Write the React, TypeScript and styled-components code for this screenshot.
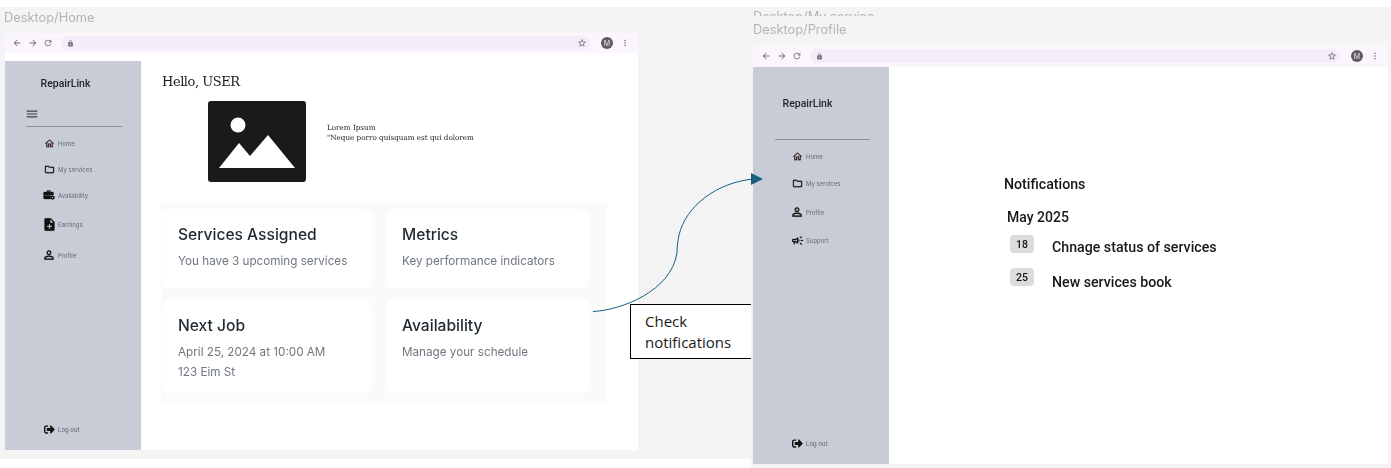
import React from "react";
import styled, { createGlobalStyle } from "styled-components";
import {
  MdArrowBack,
  MdArrowForward,
  MdLock,
  MdMenu,
  MdMoreVert,
  MdNoteAdd,
  MdOutlineCampaign,
  MdOutlineFolder,
  MdOutlineHome,
  MdOutlinePersonOutline,
  MdRefresh,
  MdStarBorder,
} from "react-icons/md";
import { FaSignOutAlt } from "react-icons/fa";

const GlobalStyle = createGlobalStyle`
  html, body {
    margin: 0;
    padding: 0;
    background: #ffffff;
    overflow: hidden;
  }
`;

const Canvas = styled.div`
  position: relative;
  width: 1391px;
  height: 468px;
  overflow: hidden;
  background: #ffffff;
  font-family: "Inter", "Liberation Sans", sans-serif;
`;

const Backdrop = styled.div<{ $x: number; $y: number; $w: number; $h: number }>`
  position: absolute;
  left: ${(p) => p.$x}px;
  top: ${(p) => p.$y}px;
  width: ${(p) => p.$w}px;
  height: ${(p) => p.$h}px;
  background: #f4f4f4;
`;

const FrameLabel = styled.div<{ $x: number; $y: number; $clip?: number }>`
  position: absolute;
  left: ${(p) => p.$x}px;
  top: ${(p) => p.$y}px;
  height: ${(p) => p.$clip ?? 16}px;
  overflow: hidden;
  font-size: 12.8px;
  line-height: 16px;
  color: #b4b4b4;
  white-space: nowrap;
  filter: blur(0.3px);
`;

const Frame = styled.div<{ $x: number; $y: number; $w: number; $h: number }>`
  position: absolute;
  left: ${(p) => p.$x}px;
  top: ${(p) => p.$y}px;
  width: ${(p) => p.$w}px;
  height: ${(p) => p.$h}px;
  display: flex;
  flex-direction: column;
  background: #ffffff;
  filter: blur(0.3px);
`;

const BrowserBar = styled.div<{ $h: number; $pad: number }>`
  flex: none;
  height: ${(p) => p.$h}px;
  display: flex;
  align-items: center;
  padding: 0 8px 0 ${(p) => p.$pad}px;
  background: #fbf5fd;
  color: #6f7276;
  font-size: 10px;
`;

const BarIcons = styled.div`
  display: flex;
  align-items: center;
  gap: 5.5px;
`;

const Omnibox = styled.div`
  flex: 1;
  height: 14px;
  margin: 0 11px 0 8px;
  padding: 0 3px 0 6px;
  display: flex;
  align-items: center;
  justify-content: space-between;
  border-radius: 7px;
  background: #f2edf8;
  font-size: 7px;
`;

const Star = styled.span`
  display: flex;
  font-size: 10px;
`;

const Avatar = styled.div`
  flex: none;
  width: 12px;
  height: 12px;
  margin-right: 7px;
  display: flex;
  align-items: center;
  justify-content: center;
  border-radius: 50%;
  background: #5f5b63;
  color: #d8d8d8;
  font-size: 7px;
  font-weight: 500;
`;

const Body = styled.div<{ $top: number }>`
  flex: 1;
  min-height: 0;
  display: flex;
  margin-top: ${(p) => p.$top}px;
`;

const Sidebar = styled.aside<{ $top: number }>`
  flex: none;
  width: 136px;
  display: flex;
  flex-direction: column;
  padding: ${(p) => p.$top}px 0 15px;
  box-sizing: border-box;
  background: #c7ccd7;
`;

const LogoCard = styled.div<{ $left: number; $h: number }>`
  width: 69px;
  height: ${(p) => p.$h}px;
  margin-left: ${(p) => p.$left}px;
  display: flex;
  align-items: center;
  justify-content: center;
  border-radius: 4px;
  box-shadow: 0 0 0 1px #c4c9d4;
  font-family: "Roboto", sans-serif;
  font-size: 10.5px;
  font-weight: 500;
  color: #23252b;
`;

const MenuSlot = styled.div`
  height: 14px;
  margin: 12px 0 0 20px;
  display: flex;
  color: #3c3f46;
  font-size: 14px;
`;

const Divider = styled.div<{ $top: number; $left: number; $w: number }>`
  height: 1px;
  width: ${(p) => p.$w}px;
  margin: ${(p) => p.$top}px 0 0 ${(p) => p.$left}px;
  background: #8c909a;
`;

const NavRow = styled.div<{ $top: number }>`
  height: 12px;
  margin-top: ${(p) => p.$top}px;
  padding-left: 39px;
  display: flex;
  align-items: center;
  gap: 4px;
  font-size: 6px;
  color: #676a73;
  white-space: nowrap;
`;

const LogoutRow = styled(NavRow)`
  margin-top: auto;
  color: #5d6069;
`;

const NavIcon = styled.span<{ $size?: number; $tint?: string }>`
  flex: none;
  width: 10px;
  display: flex;
  justify-content: center;
  font-size: ${(p) => p.$size ?? 10}px;
  color: ${(p) => p.$tint ?? "#111111"};

  svg {
    flex: none;
  }

  svg path:not([fill="none"]) {
    stroke: currentColor;
    stroke-width: 0.4px;
  }
`;

const HomeMain = styled.main`
  flex: 1;
  padding: 11px 0 0 21px;
`;

const Greeting = styled.h1`
  margin: 0;
  font-family: "DejaVu Serif", "Liberation Serif", serif;
  font-size: 13px;
  letter-spacing: -0.45px;
  line-height: 20px;
  font-weight: 400;
  color: #1b1b1b;
`;

const Hero = styled.section`
  display: flex;
  margin: 9px 0 0 46px;
`;

const HeroImage = styled.svg`
  flex: none;
  width: 98px;
  height: 81px;
`;

const HeroText = styled.p`
  margin: 21.5px 0 0 21px;
  font-family: "DejaVu Serif", "Liberation Serif", serif;
  font-size: 7.2px;
  line-height: 10px;
  color: #222222;
`;

const CardPanel = styled.section`
  width: 446px;
  height: 200px;
  margin: 21px 0 0 -1px;
  padding: 6px 0 0 1px;
  box-sizing: border-box;
  display: grid;
  grid-template-columns: 210px 203px;
  grid-template-rows: 79px 93px;
  column-gap: 14px;
  row-gap: 12px;
  background: #fafafa;
`;

const Card = styled.div`
  padding: 14.5px 16px 0;
  border-radius: 7px;
  background: #ffffff;
`;

const CardTitle = styled.h2`
  margin: 0 0 5px;
  font-size: 15.6px;
  line-height: 22px;
  font-weight: 500;
  color: #1f2a30;
`;

const CardLine = styled.div`
  font-size: 11.7px;
  line-height: 20px;
  color: #6f7780;
  white-space: nowrap;
`;

const NoticeMain = styled.main`
  flex: 1;
  padding: 108px 0 0 115px;
  font-family: "Roboto", sans-serif;
  color: #17181a;
`;

const NoticeTitle = styled.h2`
  margin: 0;
  font-size: 14.2px;
  line-height: 18px;
  font-weight: 500;
`;

const MonthLabel = styled.h3`
  margin: 15px 0 0 3px;
  font-size: 14px;
  line-height: 18px;
  font-weight: 500;
`;

const NoticeRow = styled.div<{ $top: number }>`
  display: flex;
  margin: ${(p) => p.$top}px 0 0 6px;
  font-size: 14.2px;
  font-weight: 500;
`;

const DayBadge = styled.span`
  flex: none;
  width: 24px;
  height: 18px;
  display: flex;
  align-items: center;
  justify-content: center;
  border-radius: 4px;
  background: #dcdcdc;
  font-size: 10.5px;
`;

const NoticeText = styled.span<{ $drop: number }>`
  margin: ${(p) => p.$drop}px 0 0 18px;
  line-height: 18px;
`;

const Callout = styled.div`
  position: absolute;
  left: 630px;
  top: 304px;
  width: 121px;
  height: 55px;
  box-sizing: border-box;
  padding: 6px 0 0 14px;
  border: 1px solid #000000;
  border-right: none;
  background: #ffffff;
  font-family: "Open Sans", "Noto Sans", sans-serif;
  font-size: 15px;
  line-height: 21px;
  color: #1a1a1a;
`;

const ArrowLayer = styled.svg`
  position: absolute;
  left: 585px;
  top: 165px;
  width: 185px;
  height: 155px;
  overflow: visible;
  pointer-events: none;
`;

// briefcase with a small clock badge, wider than the Material one
function BriefcaseClock() {
  return (
    <svg width="12" height="10" viewBox="0 0 12 10">
      <path
        d="M4 2V1.2C4 .7 4.4.4 4.8.4h1.9c.5 0 .8.3.8.8V2h2.2c.5 0 .8.4.8.8v2.1H.6V2.8c0-.4.4-.8.8-.8zm.9 0h1.7V1.3H4.9z"
        fill="#111111"
      />
      <path d="M.6 5.5h7v3.4H1.4c-.5 0-.8-.3-.8-.8z" fill="#111111" />
      <circle cx="9.6" cy="7.6" r="2.1" fill="#111111" />
      <circle cx="9.6" cy="7.6" r=".7" fill="#c7ccd7" />
    </svg>
  );
}

function ChromeBar({ height, pad }: { height: number; pad: number }) {
  return (
    <BrowserBar $h={height} $pad={pad}>
      <BarIcons>
        <MdArrowBack />
        <MdArrowForward />
        <MdRefresh />
      </BarIcons>
      <Omnibox>
        <MdLock />
        <Star>
          <MdStarBorder />
        </Star>
      </Omnibox>
      <Avatar>M</Avatar>
      <MdMoreVert />
    </BrowserBar>
  );
}

function Logout() {
  return (
    <LogoutRow $top={0}>
      <NavIcon $size={11}>
        <FaSignOutAlt />
      </NavIcon>
      Log out
    </LogoutRow>
  );
}

const homeNav = [
  { label: "Home", top: 10, icon: <MdOutlineHome />, size: 11, tint: "#3a1c22" },
  { label: "My services", top: 14, icon: <MdOutlineFolder />, size: 11 },
  { label: "Availability", top: 14, icon: <BriefcaseClock /> },
  { label: "Earnings", top: 17, icon: <MdNoteAdd />, size: 15 },
  { label: "Profile", top: 19, icon: <MdOutlinePersonOutline />, size: 14 },
];

const profileNav = [
  { label: "Home", top: 10, icon: <MdOutlineHome />, size: 11, tint: "#3a1c22" },
  { label: "My services", top: 15, icon: <MdOutlineFolder />, size: 11 },
  { label: "Profile", top: 17, icon: <MdOutlinePersonOutline />, size: 14 },
  { label: "Support", top: 16, icon: <MdOutlineCampaign />, size: 13 },
];

export default function App() {
  return (
    <Canvas>
      <GlobalStyle />
      <Backdrop $x={0} $y={7} $w={1391} $h={452} />
      <Backdrop $x={751} $y={459} $w={640} $h={9} />

      <FrameLabel $x={4} $y={10}>Desktop/Home</FrameLabel>
      <FrameLabel $x={753} $y={9} $clip={7}>Desktop/My service</FrameLabel>
      <FrameLabel $x={753} $y={22}>Desktop/Profile</FrameLabel>

      <Frame $x={5} $y={33} $w={633} $h={417}>
        <ChromeBar height={20} pad={7} />
        <Body $top={8}>
          <Sidebar $top={10}>
            <LogoCard $left={26} $h={24}>RepairLink</LogoCard>
            <MenuSlot>
              <MdMenu />
            </MenuSlot>
            <Divider $top={5} $left={21} $w={96} />
            {homeNav.map((item) => (
              <NavRow key={item.label} $top={item.top}>
                <NavIcon $size={item.size} $tint={item.tint}>{item.icon}</NavIcon>
                {item.label}
              </NavRow>
            ))}
            <Logout />
          </Sidebar>
          <HomeMain>
            <Greeting>Hello, USER</Greeting>
            <Hero>
              <HeroImage viewBox="0 0 98 81">
                <rect width="98" height="81" rx="3" fill="#1a1a1a" />
                <circle cx="30" cy="24" r="7.5" fill="#ffffff" />
                <polygon points="11,67 31,42 42,55 60,34 87,67" fill="#ffffff" />
              </HeroImage>
              <HeroText>
                Lorem Ipsum
                <br />
                "Neque porro quisquam est qui dolorem
              </HeroText>
            </Hero>
            <CardPanel>
              <Card>
                <CardTitle>Services Assigned</CardTitle>
                <CardLine>You have 3 upcoming services</CardLine>
              </Card>
              <Card>
                <CardTitle>Metrics</CardTitle>
                <CardLine>Key performance indicators</CardLine>
              </Card>
              <Card>
                <CardTitle>Next Job</CardTitle>
                <CardLine>April 25, 2024 at 10:00 AM</CardLine>
                <CardLine>123 Eim St</CardLine>
              </Card>
              <Card>
                <CardTitle>Availability</CardTitle>
                <CardLine>Manage your schedule</CardLine>
              </Card>
            </CardPanel>
          </HomeMain>
        </Body>
      </Frame>

      <Frame $x={753} $y={45} $w={635} $h={419}>
        <ChromeBar height={22} pad={8} />
        <Body $top={0}>
          <Sidebar $top={25}>
            <LogoCard $left={20} $h={23}>RepairLink</LogoCard>
            <Divider $top={24} $left={22} $w={95} />
            {profileNav.map((item) => (
              <NavRow key={item.label} $top={item.top}>
                <NavIcon $size={item.size} $tint={item.tint}>{item.icon}</NavIcon>
                {item.label}
              </NavRow>
            ))}
            <Logout />
          </Sidebar>
          <NoticeMain>
            <NoticeTitle>Notifications</NoticeTitle>
            <MonthLabel>May 2025</MonthLabel>
            <NoticeRow $top={9}>
              <DayBadge>18</DayBadge>
              <NoticeText $drop={3}>Chnage status of services</NoticeText>
            </NoticeRow>
            <NoticeRow $top={12}>
              <DayBadge>25</DayBadge>
              <NoticeText $drop={5}>New services book</NoticeText>
            </NoticeRow>
          </NoticeMain>
        </Body>
      </Frame>

      <Callout>
        Check
        <br />
        notifications
      </Callout>

      <ArrowLayer viewBox="585 165 185 155">
        <path
          d="M593 311.5 C 622 310, 671 291, 677 253 C 677 246, 678 240, 679 235 C 686 206, 716 183, 753 179"
          fill="none"
          stroke="#156082"
          strokeWidth="1"
        />
        <polygon points="751,173 763,179 751,185" fill="#156082" />
      </ArrowLayer>
    </Canvas>
  );
}
